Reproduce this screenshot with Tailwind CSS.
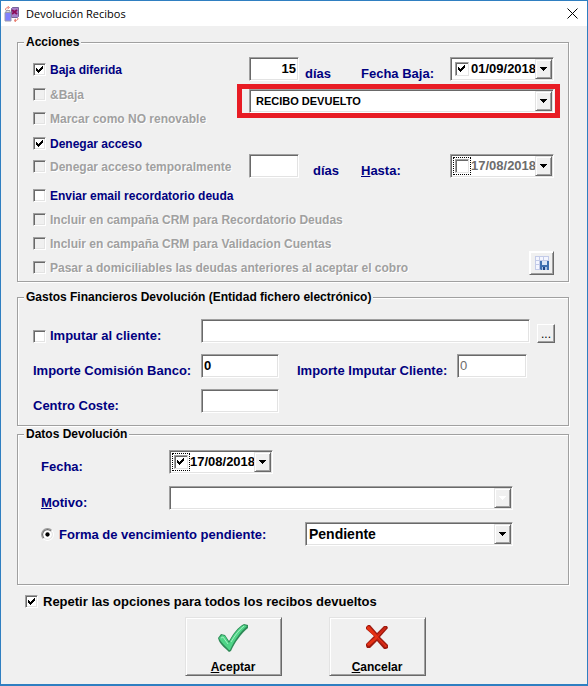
<!DOCTYPE html>
<html lang="es">
<head>
  <meta charset="UTF-8">
  <meta name="viewport" content="width=device-width, initial-scale=1.0">
  <title>Devolución Recibos</title>
  <script src="https://cdn.jsdelivr.net/npm/@tailwindcss/browser@4"></script>
</head>
<body class="bg-[#f0f0f0]">
  <div class="flex min-h-screen flex-col border border-b-2 border-[#2f7fc1] bg-[#f0f0f0] font-['Liberation_Sans',Arial,sans-serif] text-[13px] leading-[14px] font-bold text-[#000080]">

    <!-- Title bar -->
    <header class="flex h-[25px] items-center bg-white pl-[3px] pr-[9px] text-black">
      <svg class="size-4" viewBox="0 0 16 16">
        <path d="M7.5 2.5l1-1h6v9l-1 1h-6z" fill="#a87fc9" stroke="#77639a" stroke-width="1" />
        <path d="M8 4l5 4M13 4l-5 4" stroke="#8c0f5a" stroke-width="2" />
        <path d="M1 6.5h6v8.5H1z" fill="#8080ff" stroke="#9a9aac" stroke-width="1" />
        <path d="M2 4.5h4v2H2z" fill="#d9d9e2" stroke="#9a9aac" stroke-width="1" />
        <path d="M1.5 4c0-2 1-2.500 3-2.500M3.500 0l2 1.500-2 1.500M14 12c0 2-1 2.500-3 2.500M12 13l-2 1.500 2 1.500" fill="none" stroke="#e87a6c" stroke-width="1" />
      </svg>
      <h1 class="ml-1.5 flex-1 font-['Open_Sans','Noto_Sans',sans-serif] text-[11px] font-normal">Devolución Recibos</h1>
      <button type="button" aria-label="Cerrar">
        <svg class="size-[11px]" viewBox="0 0 11 11" fill="none" stroke="#000" stroke-width="1"><path d="M.5.5l10 10M10.5.5l-10 10" /></svg>
      </button>
    </header>

    <form class="flex flex-1 flex-col pt-[9px] pl-4 pr-[18px]">

      <!-- Acciones -->
      <fieldset class="min-w-0 border border-[#a0a0a0] px-1.5 shadow-[1px_1px_0_#fff,inset_1px_1px_0_#fff]">
        <legend class="bg-[#f0f0f0] px-0.5 text-[12px] leading-[14px] text-black">Acciones</legend>
        <div class="flex flex-col pt-2 pl-[9px] pr-2 pb-0.5">
          <div class="flex h-6 items-end">
            <label class="flex h-6 w-[216px] shrink-0 items-center gap-1 text-[12px]">
              <span class="grid">
                <input type="checkbox" checked class="peer col-start-1 row-start-1 size-[13px] appearance-none border border-t-[#a0a0a0] border-l-[#a0a0a0] border-r-white border-b-white bg-white shadow-[inset_1px_1px_0_#696969,inset_-1px_-1px_0_#e3e3e3]">
                <svg class="pointer-events-none col-start-1 row-start-1 hidden size-[13px] peer-checked:block" viewBox="0 0 13 13"><path d="M3 5h1v1h1v1h1v-1h1v-1h1v-1h1v-1h1v3h-1v1h-1v1h-1v1h-1v1h-1v-1h-1v-1h-1z" /></svg>
              </span>
              <span class="pt-0.5">Baja diferida</span>
            </label>
            <input id="dias" type="text" value="15" class="h-6 w-[50px] shrink-0 border border-t-[#a0a0a0] border-l-[#a0a0a0] border-r-white border-b-white bg-white px-0.5 pb-0.5 text-right text-black shadow-[inset_1px_1px_0_#696969,inset_-1px_-1px_0_#e3e3e3]">
            <label for="dias" class="w-[62px] shrink-0 pl-1.5">días</label>
            <label for="fechaBaja">Fecha Baja:</label>
            <div class="ml-auto flex h-6 w-[104px] items-center border border-t-[#a0a0a0] border-l-[#a0a0a0] border-r-white border-b-white bg-white p-px pl-1 shadow-[inset_1px_1px_0_#696969,inset_-1px_-1px_0_#e3e3e3]">
              <span class="grid">
                <input type="checkbox" checked aria-label="Usar fecha de baja" class="peer col-start-1 row-start-1 size-[14px] appearance-none border border-t-[#a0a0a0] border-l-[#a0a0a0] border-r-[#e3e3e3] border-b-[#e3e3e3] bg-white shadow-[inset_1px_1px_0_#696969]">
                <svg class="pointer-events-none col-start-1 row-start-1 hidden size-[13px] peer-checked:block" viewBox="0 0 13 13"><path d="M3 5h1v1h1v1h1v-1h1v-1h1v-1h1v-1h1v3h-1v1h-1v1h-1v1h-1v1h-1v-1h-1v-1h-1z" /></svg>
              </span>
              <input id="fechaBaja" type="text" value="01/09/2018" class="min-w-0 flex-1 pl-0.5 text-black">
              <button type="button" aria-label="Abrir calendario" class="flex w-[17px] shrink-0 items-center justify-center self-stretch border border-t-[#e3e3e3] border-l-[#e3e3e3] border-r-[#696969] border-b-[#696969] bg-[#f0f0f0] shadow-[inset_1px_1px_0_#fff,inset_-1px_-1px_0_#a0a0a0]">
                <svg class="h-1 w-[7px]" viewBox="0 0 7 4"><path d="M0 0h7v1h-1v1h-1v1h-1v1h-1v-1h-1v-1h-1v-1h-1z" /></svg>
              </button>
            </div>
          </div>

          <div class="mt-px mb-0.5 flex items-start">
            <div class="w-[204px] shrink-0 text-[12px] text-[#a0a0a0] [text-shadow:1px_1px_0_#fff]">
              <label class="flex h-6 items-center gap-1">
                <input type="checkbox" disabled class="size-[13px] appearance-none border border-t-[#a0a0a0] border-l-[#a0a0a0] border-r-white border-b-white shadow-[inset_1px_1px_0_#696969,inset_-1px_-1px_0_#e3e3e3]">
                <span class="pt-0.5">&amp;Baja</span>
              </label>
              <label class="flex h-6 items-center gap-1">
                <input type="checkbox" disabled class="size-[13px] appearance-none border border-t-[#a0a0a0] border-l-[#a0a0a0] border-r-white border-b-white shadow-[inset_1px_1px_0_#696969,inset_-1px_-1px_0_#e3e3e3]">
                <span class="pt-0.5">Marcar como NO renovable</span>
              </label>
            </div>
            <!-- highlighted select -->
            <div class="mt-0.5 -mr-1.5 flex-1 border-5 border-[#e81c24] pr-px pl-[7px]">
              <div class="flex h-6 border border-t-[#a0a0a0] border-l-[#a0a0a0] border-r-white border-b-white bg-white p-px shadow-[inset_1px_1px_0_#696969,inset_-1px_-1px_0_#e3e3e3]">
                <select aria-label="Motivo de baja" class="min-w-0 flex-1 appearance-none pl-[5px] text-[11px] text-black">
                  <option>RECIBO DEVUELTO</option>
                </select>
                <span class="pointer-events-none flex w-[17px] items-center justify-center border border-t-[#e3e3e3] border-l-[#e3e3e3] border-r-[#696969] border-b-[#696969] bg-[#f0f0f0] shadow-[inset_1px_1px_0_#fff,inset_-1px_-1px_0_#a0a0a0]">
                  <svg class="h-1 w-[7px]" viewBox="0 0 7 4"><path d="M0 0h7v1h-1v1h-1v1h-1v1h-1v-1h-1v-1h-1v-1h-1z" /></svg>
                </span>
              </div>
            </div>
          </div>

          <label class="flex h-[22px] items-center gap-1 text-[12px]">
            <span class="grid">
              <input type="checkbox" checked class="peer col-start-1 row-start-1 size-[13px] appearance-none border border-t-[#a0a0a0] border-l-[#a0a0a0] border-r-white border-b-white bg-white shadow-[inset_1px_1px_0_#696969,inset_-1px_-1px_0_#e3e3e3]">
              <svg class="pointer-events-none col-start-1 row-start-1 hidden size-[13px] peer-checked:block" viewBox="0 0 13 13"><path d="M3 5h1v1h1v1h1v-1h1v-1h1v-1h1v-1h1v3h-1v1h-1v1h-1v1h-1v1h-1v-1h-1v-1h-1z" /></svg>
            </span>
            <span class="pt-0.5">Denegar acceso</span>
          </label>

          <div class="mb-[5px] flex h-6 items-end">
            <label class="flex h-6 w-[216px] shrink-0 items-center gap-1 text-[12px] text-[#a0a0a0] [text-shadow:1px_1px_0_#fff]">
              <input type="checkbox" disabled class="size-[13px] appearance-none border border-t-[#a0a0a0] border-l-[#a0a0a0] border-r-white border-b-white shadow-[inset_1px_1px_0_#696969,inset_-1px_-1px_0_#e3e3e3]">
              <span class="pt-0.5">Denegar acceso temporalmente</span>
            </label>
            <input id="diasTemp" type="text" class="h-6 w-[50px] shrink-0 border border-t-[#a0a0a0] border-l-[#a0a0a0] border-r-white border-b-white bg-white px-0.5 text-right text-black shadow-[inset_1px_1px_0_#696969,inset_-1px_-1px_0_#e3e3e3]">
            <label for="diasTemp" class="w-[62px] shrink-0 pl-3.5">días</label>
            <label for="hasta"><u>H</u>asta:</label>
            <div class="ml-auto flex h-6 w-[104px] items-center border border-t-[#a0a0a0] border-l-[#a0a0a0] border-r-white border-b-white bg-white p-px pl-1 shadow-[inset_1px_1px_0_#696969,inset_-1px_-1px_0_#e3e3e3]">
              <input type="checkbox" aria-label="Usar fecha hasta" class="size-[14px] appearance-none border border-t-[#a0a0a0] border-l-[#a0a0a0] border-r-[#e3e3e3] border-b-[#e3e3e3] bg-white shadow-[inset_1px_1px_0_#696969] outline-1 outline-offset-1 outline-dotted outline-black">
              <input id="hasta" type="text" value="17/08/2018" disabled class="min-w-0 flex-1 pl-0.5 text-[#6d6d6d]">
              <button type="button" aria-label="Abrir calendario" class="flex w-[17px] shrink-0 items-center justify-center self-stretch border border-t-[#e3e3e3] border-l-[#e3e3e3] border-r-[#696969] border-b-[#696969] bg-[#f0f0f0] shadow-[inset_1px_1px_0_#fff,inset_-1px_-1px_0_#a0a0a0]">
                <svg class="h-1 w-[7px]" viewBox="0 0 7 4"><path d="M0 0h7v1h-1v1h-1v1h-1v1h-1v-1h-1v-1h-1v-1h-1z" /></svg>
              </button>
            </div>
          </div>

          <label class="flex h-6 items-center gap-1 text-[12px]">
            <input type="checkbox" class="size-[13px] appearance-none border border-t-[#a0a0a0] border-l-[#a0a0a0] border-r-white border-b-white bg-white shadow-[inset_1px_1px_0_#696969,inset_-1px_-1px_0_#e3e3e3]">
            <span class="pt-0.5">Enviar email recordatorio deuda</span>
          </label>

          <div class="flex items-end justify-between">
            <div class="text-[12px] text-[#a0a0a0] [text-shadow:1px_1px_0_#fff]">
              <label class="flex h-6 items-center gap-1">
                <input type="checkbox" disabled class="size-[13px] appearance-none border border-t-[#a0a0a0] border-l-[#a0a0a0] border-r-white border-b-white shadow-[inset_1px_1px_0_#696969,inset_-1px_-1px_0_#e3e3e3]">
                <span class="pt-0.5">Incluir en campaña CRM para Recordatorio Deudas</span>
              </label>
              <label class="flex h-6 items-center gap-1">
                <input type="checkbox" disabled class="size-[13px] appearance-none border border-t-[#a0a0a0] border-l-[#a0a0a0] border-r-white border-b-white shadow-[inset_1px_1px_0_#696969,inset_-1px_-1px_0_#e3e3e3]">
                <span class="pt-0.5">Incluir en campaña CRM para Validacion Cuentas</span>
              </label>
              <label class="flex h-6 items-center gap-1">
                <input type="checkbox" disabled class="size-[13px] appearance-none border border-t-[#a0a0a0] border-l-[#a0a0a0] border-r-white border-b-white shadow-[inset_1px_1px_0_#696969,inset_-1px_-1px_0_#e3e3e3]">
                <span class="pt-0.5">Pasar a domiciliables las deudas anteriores al aceptar el cobro</span>
              </label>
            </div>
            <button type="button" aria-label="Guardar" class="mb-1 flex h-6 w-[25px] items-center justify-center border border-t-white border-l-white border-r-[#696969] border-b-[#696969] bg-[#f0f0f0] shadow-[inset_1px_1px_0_#fff,inset_-1px_-1px_0_#a0a0a0]">
              <svg class="size-[14px]" viewBox="0 0 14 14">
                <path d="M0 0h14v14H0z" fill="#f4f6ff" />
                <path d="M.5 0v14M4.5 0v14M8.5 0v14M13.5 0v14M0 .5h14M0 4.5h14M0 8.5h14M0 13.5h14" stroke="#c3cbe8" stroke-width="1" />
                <path d="M5 5h9v9H6l-1-1z" fill="#3f70b0" />
                <path d="M7 5h5v4H7z" fill="#dbe7f8" />
                <path d="M7 11h5v3H7z" fill="#a9c4e8" />
                <path d="M8 11h2v3H8z" fill="#1f4585" />
              </svg>
            </button>
          </div>
        </div>
      </fieldset>

      <!-- Gastos financieros -->
      <fieldset class="mt-2 min-w-0 border border-[#a0a0a0] px-1.5 shadow-[1px_1px_0_#fff,inset_1px_1px_0_#fff]">
        <legend class="bg-[#f0f0f0] px-0.5 text-[12px] leading-[14px] text-black">Gastos Financieros Devolución (Entidad fichero electrónico)</legend>
        <div class="flex flex-col gap-[11px] pt-[15px] pr-[7px] pb-3 pl-[9px]">
          <div class="flex items-end">
            <label class="flex w-[168px] shrink-0 items-center gap-1">
              <input type="checkbox" class="size-[13px] appearance-none border border-t-[#a0a0a0] border-l-[#a0a0a0] border-r-white border-b-white bg-white shadow-[inset_1px_1px_0_#696969,inset_-1px_-1px_0_#e3e3e3]">
              Imputar al cliente:
            </label>
            <input type="text" aria-label="Cliente" class="h-6 min-w-0 flex-1 border border-t-[#a0a0a0] border-l-[#a0a0a0] border-r-white border-b-white bg-white px-0.5 text-black shadow-[inset_1px_1px_0_#696969,inset_-1px_-1px_0_#e3e3e3]">
            <button type="button" class="ml-[7px] h-[19px] w-[18px] border border-t-white border-l-white border-r-[#696969] border-b-[#696969] bg-[#f0f0f0] text-[12px] font-normal text-black shadow-[inset_-1px_-1px_0_#a0a0a0]">...</button>
          </div>
          <div class="flex items-end">
            <label for="comision" class="w-[168px] shrink-0">Importe Comisión Banco:</label>
            <input id="comision" type="text" value="0" class="h-6 w-[78px] border border-t-[#a0a0a0] border-l-[#a0a0a0] border-r-white border-b-white bg-white px-0.5 pb-0.5 text-black shadow-[inset_1px_1px_0_#696969,inset_-1px_-1px_0_#e3e3e3]">
            <label for="importeCliente" class="ml-[18px] w-40">Importe Imputar Cliente:</label>
            <input id="importeCliente" type="text" value="0" disabled class="h-6 w-[70px] border border-t-[#a0a0a0] border-l-[#a0a0a0] border-r-white border-b-white bg-white px-0.5 pb-0.5 font-normal text-[#6d6d6d] shadow-[inset_1px_1px_0_#696969,inset_-1px_-1px_0_#e3e3e3]">
          </div>
          <div class="flex items-end">
            <label for="centro" class="w-[168px] shrink-0">Centro Coste:</label>
            <input id="centro" type="text" class="h-6 w-[78px] border border-t-[#a0a0a0] border-l-[#a0a0a0] border-r-white border-b-white bg-white px-0.5 text-black shadow-[inset_1px_1px_0_#696969,inset_-1px_-1px_0_#e3e3e3]">
          </div>
        </div>
      </fieldset>

      <!-- Datos devolución -->
      <fieldset class="mt-px min-w-0 border border-[#a0a0a0] px-1.5 shadow-[1px_1px_0_#fff,inset_1px_1px_0_#fff]">
        <legend class="bg-[#f0f0f0] px-0.5 text-[12px] leading-[14px] text-black">Datos Devolución</legend>
        <div class="flex flex-col gap-3 pt-[9px] pr-[49px] pb-[38px] pl-[17px]">
          <div class="flex items-end">
            <label for="fecha" class="w-32 shrink-0">Fecha:</label>
            <div class="flex h-6 w-[104px] items-center border border-t-[#a0a0a0] border-l-[#a0a0a0] border-r-white border-b-white bg-white p-px pl-1 shadow-[inset_1px_1px_0_#696969,inset_-1px_-1px_0_#e3e3e3]">
              <span class="grid">
                <input type="checkbox" checked aria-label="Usar fecha" class="peer col-start-1 row-start-1 size-[14px] appearance-none border border-t-[#a0a0a0] border-l-[#a0a0a0] border-r-[#e3e3e3] border-b-[#e3e3e3] bg-white shadow-[inset_1px_1px_0_#696969] outline-1 outline-offset-1 outline-dotted outline-black">
                <svg class="pointer-events-none col-start-1 row-start-1 hidden size-[13px] peer-checked:block" viewBox="0 0 13 13"><path d="M3 5h1v1h1v1h1v-1h1v-1h1v-1h1v-1h1v3h-1v1h-1v1h-1v1h-1v1h-1v-1h-1v-1h-1z" /></svg>
              </span>
              <input id="fecha" type="text" value="17/08/2018" class="min-w-0 flex-1 pl-0.5 text-black">
              <button type="button" aria-label="Abrir calendario" class="flex w-[17px] shrink-0 items-center justify-center self-stretch border border-t-[#e3e3e3] border-l-[#e3e3e3] border-r-[#696969] border-b-[#696969] bg-[#f0f0f0] shadow-[inset_1px_1px_0_#fff,inset_-1px_-1px_0_#a0a0a0]">
                <svg class="h-1 w-[7px]" viewBox="0 0 7 4"><path d="M0 0h7v1h-1v1h-1v1h-1v1h-1v-1h-1v-1h-1v-1h-1z" /></svg>
              </button>
            </div>
          </div>
          <div class="flex items-end">
            <label for="motivo" class="w-32 shrink-0"><u>M</u>otivo:</label>
            <div class="flex h-6 flex-1 border border-t-[#a0a0a0] border-l-[#a0a0a0] border-r-white border-b-white bg-white p-px shadow-[inset_1px_1px_0_#696969,inset_-1px_-1px_0_#e3e3e3]">
              <select id="motivo" disabled class="min-w-0 flex-1 appearance-none pl-0.5 text-[14px] text-black">
                <option></option>
              </select>
              <span class="pointer-events-none flex w-[17px] items-center justify-center border border-t-[#e3e3e3] border-l-[#e3e3e3] border-r-[#696969] border-b-[#696969] bg-[#f0f0f0] shadow-[inset_1px_1px_0_#fff,inset_-1px_-1px_0_#a0a0a0]">
                <svg class="h-1 w-[7px]" viewBox="0 0 7 4" fill="#fff"><path d="M0 0h7v1h-1v1h-1v1h-1v1h-1v-1h-1v-1h-1v-1h-1z" /></svg>
              </span>
            </div>
          </div>
          <div class="flex items-center">
            <label class="flex w-[264px] shrink-0 items-center gap-[5px]">
              <span class="grid">
                <input type="radio" name="forma" checked class="peer col-start-1 row-start-1 size-[13px] appearance-none">
                <svg class="pointer-events-none col-start-1 row-start-1 size-[13px]" viewBox="0 0 12 12">
                  <circle cx="6" cy="6" r="5" fill="#fff" />
                  <path d="M2.1 9.9A5.5 5.5 0 0 1 9.9 2.1" fill="none" stroke="#a0a0a0" stroke-width="1" />
                  <path d="M2.8 9.2A4.5 4.5 0 0 1 9.2 2.8" fill="none" stroke="#696969" stroke-width="1" />
                  <path d="M9.9 2.1A5.5 5.5 0 0 1 2.1 9.9" fill="none" stroke="#fff" stroke-width="1" />
                  <path d="M9.2 2.8A4.5 4.5 0 0 1 2.8 9.2" fill="none" stroke="#e3e3e3" stroke-width="1" />
                  <circle cx="6" cy="6" r="2" fill="#000" />
                </svg>
              </span>
              <span class="pt-0.5">Forma de vencimiento pendiente:</span>
            </label>
            <div class="flex h-6 flex-1 border border-t-[#a0a0a0] border-l-[#a0a0a0] border-r-white border-b-white bg-white p-px shadow-[inset_1px_1px_0_#696969,inset_-1px_-1px_0_#e3e3e3]">
              <select aria-label="Forma de vencimiento" class="min-w-0 flex-1 appearance-none pl-0.5 text-[14px] text-black">
                <option>Pendiente</option>
              </select>
              <span class="pointer-events-none flex w-[17px] items-center justify-center border border-t-[#e3e3e3] border-l-[#e3e3e3] border-r-[#696969] border-b-[#696969] bg-[#f0f0f0] shadow-[inset_1px_1px_0_#fff,inset_-1px_-1px_0_#a0a0a0]">
                <svg class="h-1 w-[7px]" viewBox="0 0 7 4"><path d="M0 0h7v1h-1v1h-1v1h-1v1h-1v-1h-1v-1h-1v-1h-1z" /></svg>
              </span>
            </div>
          </div>
        </div>
      </fieldset>

      <label class="mt-2 flex h-4 items-center gap-[5px] pl-2 text-black">
        <span class="grid">
          <input type="checkbox" checked class="peer col-start-1 row-start-1 size-[13px] appearance-none border border-t-[#a0a0a0] border-l-[#a0a0a0] border-r-white border-b-white bg-white shadow-[inset_1px_1px_0_#696969,inset_-1px_-1px_0_#e3e3e3]">
          <svg class="pointer-events-none col-start-1 row-start-1 hidden size-[13px] peer-checked:block" viewBox="0 0 13 13"><path d="M3 5h1v1h1v1h1v-1h1v-1h1v-1h1v-1h1v3h-1v1h-1v1h-1v1h-1v1h-1v-1h-1v-1h-1z" /></svg>
        </span>
        <span class="pt-0.5">Repetir las opciones para todos los recibos devueltos</span>
      </label>

      <!-- Buttons -->
      <div class="mt-2 flex justify-center gap-[47px] pb-[7px] pl-6 text-[12px] text-black">
        <button type="submit" class="flex h-[59px] w-[97px] flex-col items-center justify-between border border-t-[#e3e3e3] border-l-[#e3e3e3] border-r-[#696969] border-b-[#696969] pt-1.5 pb-px shadow-[inset_1px_1px_0_#fff,inset_-1px_-1px_0_#a0a0a0]">
          <svg class="h-7 w-[30px]" viewBox="0 0 30 28">
            <path d="M0 14l3-4 4 1 4 6C15 10 20 3 26 0l4 1v3C23 10 17 18 13 27l-2 1C8 25 3 21 1 17z" fill="#2e8a57" />
            <path d="M1 14l3-3 3 1 4 7C15 11 20 4 26 1l3 1C22 8 16 17 12 26h-1C8 23 4 19 2 16z" fill="#4fd487" />
            <path d="M3 14l2-1 5 7M13 18C17 11 21 6 26 2" fill="none" stroke="#a3f0c1" stroke-width="1" />
          </svg>
          <span><u>A</u>ceptar</span>
        </button>
        <button type="button" class="flex h-[59px] w-[97px] flex-col items-center justify-between border border-t-[#e3e3e3] border-l-[#e3e3e3] border-r-[#696969] border-b-[#696969] pt-1.5 pb-px shadow-[inset_1px_1px_0_#fff,inset_-1px_-1px_0_#a0a0a0]">
          <svg class="h-[26px] w-6" viewBox="0 0 24 26">
            <path d="M1 3l2-2h2l7 8 7-7h3l1 2-8 9 8 8v3l-2 1h-2l-7-8-7 7H2l-1-2v-2l8-8-8-7z" fill="#9e1a10" />
            <path d="M2 3l2-1 8 9 8-8 1 1-8 9 9 9-1 1h-1l-8-8-8 7-2-1v-1l8-7-8-8z" fill="#e63214" />
            <path d="M12 14l8 8M12 12l8-8" stroke="#c9221a" stroke-width="1" />
          </svg>
          <span><u>C</u>ancelar</span>
        </button>
      </div>
    </form>
  </div>
</body>
</html>
